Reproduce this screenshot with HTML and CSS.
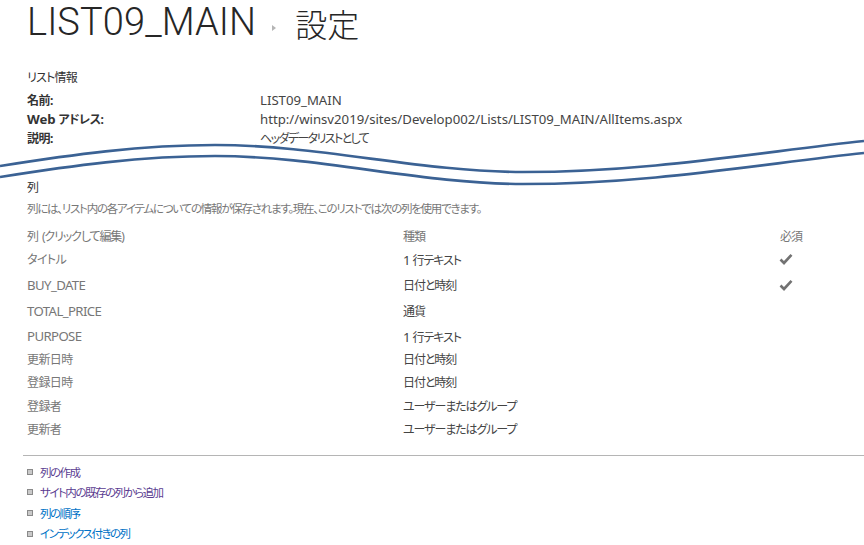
FILE: index.html
```html
<!DOCTYPE html>
<html lang="ja">
<head>
<meta charset="utf-8">
<title>LIST09_MAIN - 設定</title>
<link rel="stylesheet" href="styles.css">
</head>
<body>
<div class="page">
  <h1 class="page-title">
    <span class="title-list">LIST09_MAIN</span>
    <span class="crumb-arrow"></span>
    <span class="title-jp">設定</span>
  </h1>

  <section class="list-info">
    <h2 class="section-head">リスト情報</h2>
    <div class="info-grid">
      <div class="info-label">名前:</div>
      <div class="info-value latin">LIST09_MAIN</div>
      <div class="info-label"><span class="latin">Web</span> アドレス:</div>
      <div class="info-value latin">http://winsv2019/sites/Develop002/Lists/LIST09_MAIN/AllItems.aspx</div>
      <div class="info-label">説明:</div>
      <div class="info-value">ヘッダデータリストとして</div>
    </div>
  </section>

  <svg class="wave" viewBox="0 0 864 40" preserveAspectRatio="none" aria-hidden="true">
    <path d="M0,27 C70,16 140,6 215,6 C320,6 420,33 523,33 C650,33 760,13 864,2" />
    <path d="M0,38 C70,27 140,17 215,17 C320,17 420,45 523,45 C650,45 760,25 864,14" />
  </svg>

  <section class="columns">
    <h2 class="section-head">列</h2>
    <p class="columns-desc">列には、リスト内の各アイテムについての情報が保存されます。現在、このリストでは次の列を使用できます。</p>

    <div class="col-table">
      <div class="col-row col-head">
        <div class="c-name">列 (クリックして編集)</div>
        <div class="c-type">種類</div>
        <div class="c-req">必須</div>
      </div>
      <div class="col-row h26">
        <div class="c-name ja">タイトル</div>
        <div class="c-type ja"><span class="latin">1</span> 行テキスト</div>
        <div class="c-req"><svg class="check" viewBox="0 0 14 12"><path d="M1.5,6.5 L5,10 L12.5,1.8"/></svg></div>
      </div>
      <div class="col-row h26">
        <div class="c-name latin">BUY_DATE</div>
        <div class="c-type ja">日付と時刻</div>
        <div class="c-req"><svg class="check" viewBox="0 0 14 12"><path d="M1.5,6.5 L5,10 L12.5,1.8"/></svg></div>
      </div>
      <div class="col-row h26">
        <div class="c-name latin">TOTAL_PRICE</div>
        <div class="c-type ja">通貨</div>
        <div class="c-req"></div>
      </div>
      <div class="col-row h24">
        <div class="c-name latin">PURPOSE</div>
        <div class="c-type ja"><span class="latin">1</span> 行テキスト</div>
        <div class="c-req"></div>
      </div>
      <div class="col-row h22">
        <div class="c-name ja">更新日時</div>
        <div class="c-type ja">日付と時刻</div>
        <div class="c-req"></div>
      </div>
      <div class="col-row h24">
        <div class="c-name ja">登録日時</div>
        <div class="c-type ja">日付と時刻</div>
        <div class="c-req"></div>
      </div>
      <div class="col-row h24">
        <div class="c-name ja">登録者</div>
        <div class="c-type ja">ユーザーまたはグループ</div>
        <div class="c-req"></div>
      </div>
      <div class="col-row h22">
        <div class="c-name ja">更新者</div>
        <div class="c-type ja">ユーザーまたはグループ</div>
        <div class="c-req"></div>
      </div>
    </div>
  </section>

  <hr class="divider">

  <ul class="col-links">
    <li><a class="visited" href="#">列の作成</a></li>
    <li><a class="visited" href="#">サイト内の既存の列から追加</a></li>
    <li><a href="#">列の順序</a></li>
    <li><a href="#">インデックス付きの列</a></li>
  </ul>
</div>
</body>
</html>
```

FILE: styles.css
```css
html, body {
  margin: 0;
  padding: 0;
  background: #fff;
}

body {
  font-family: "Noto Sans", "Noto Sans CJK JP", sans-serif;
  font-size: 12px;
  font-feature-settings: "palt";
  color: #444;
  overflow: hidden;
}

.page {
  width: 864px;
  height: 545px;
  overflow: hidden;
}

/* Latin runs sit a little larger than the Japanese text around them */
.latin {
  font-size: 13.2px;
  letter-spacing: 0;
}

/* Page title with breadcrumb arrow */
.page-title {
  margin: 0 0 21.5px 27px;
  display: flex;
  align-items: flex-start;
  font-weight: 300;
  color: #262626;
  white-space: nowrap;
  line-height: normal;
}

.title-list {
  font-family: Roboto, "Noto Sans", sans-serif;
  font-size: 38px;
  font-weight: 300;
  letter-spacing: 0.1px;
}

.crumb-arrow {
  width: 0;
  height: 0;
  margin: 25px 0 0 16px;
  border-top: 3.5px solid transparent;
  border-bottom: 3.5px solid transparent;
  border-left: 4px solid #b5b5b5;
}

.title-jp {
  font-family: "Noto Sans CJK JP", sans-serif;
  font-size: 32px;
  font-weight: 300;
  margin-left: 19px;
}

/* Section headings */
.section-head {
  margin: 0 0 3px 27px;
  font-size: 12px;
  font-weight: normal;
  line-height: 20px;
  height: 20px;
  color: #333;
  letter-spacing: -0.8px;
}

.info-grid {
  margin-left: 27px;
  display: grid;
  grid-template-columns: 233px 1fr;
  grid-auto-rows: 19px;
  line-height: 19px;
}

.info-label {
  font-weight: bold;
  color: #333;
  letter-spacing: -0.5px;
}

.info-value {
  color: #444;
  letter-spacing: -1.6px;
}

.info-value.latin {
  letter-spacing: 0;
}

/* Torn-page wave between the info block and the columns block */
.wave {
  display: block;
  width: 864px;
  height: 40px;
  margin-top: -9px;
  overflow: visible;
}

.wave path {
  fill: none;
  stroke: #3b6294;
  stroke-width: 2.6;
}

.columns .section-head {
  height: 18px;
  line-height: 18px;
  margin: 0 0 3px 27px;
}

.columns-desc {
  margin: 0 0 10px 27px;
  font-size: 11.5px;
  line-height: 18px;
  color: #777;
  letter-spacing: -1.25px;
  white-space: nowrap;
}

/* Column table */
.col-table {
  margin-left: 27px;
}

.col-row {
  display: grid;
  grid-template-columns: 376px 377px 1fr;
  height: 24px;
  align-items: center;
  line-height: 18px;
}

.col-row.col-head {
  height: 18px;
  color: #777;
}

.col-row.h26 { height: 26px; }
.col-row.h24 { height: 24px; }
.col-row.h22 { height: 22px; }

.c-name {
  color: #777;
  letter-spacing: -0.6px;
}

.c-type {
  color: #444;
  letter-spacing: -1.1px;
}

.col-head .c-name,
.col-head .c-type,
.col-head .c-req {
  color: #777;
  letter-spacing: -1.1px;
  word-spacing: 2px;
}

/* Japanese-only cells ride slightly high in the line box; push them down */
.col-row .ja {
  padding-top: 3px;
}

.c-req {
  display: flex;
  align-items: center;
}

.check {
  width: 14px;
  height: 12px;
  margin-left: -1px;
}

.check path {
  fill: none;
  stroke: #727272;
  stroke-width: 2.6;
  stroke-linecap: butt;
  stroke-linejoin: miter;
}

.divider {
  margin: 15px 0 7px 23px;
  border: 0;
  border-top: 1px solid #b5b5b5;
  height: 0;
}

/* Related links */
.col-links {
  list-style: none;
  margin: 0 0 0 27px;
  padding: 0;
}

.col-links li {
  height: 20.67px;
  line-height: 20.67px;
  display: flex;
  align-items: center;
}

.col-links li::before {
  content: "";
  width: 4px;
  height: 4px;
  border: 1px solid #8a8a8a;
  background: #c9c9c9;
  margin-right: 7px;
  margin-top: -2px;
}

.col-links a {
  color: #0072c6;
  text-decoration: none;
  font-size: 11.5px;
  letter-spacing: -1.5px;
}

.col-links a.visited {
  color: #5b3d91;
}
```
